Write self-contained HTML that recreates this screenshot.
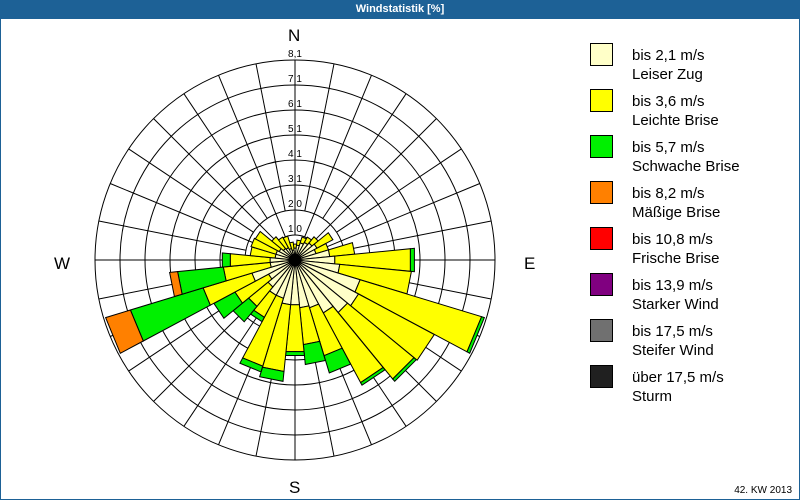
<!DOCTYPE html>
<html><head><meta charset="utf-8">
<style>
html,body{margin:0;padding:0;background:#fff;}
#wrap{position:relative;width:798px;height:499px;border:1px solid #1d6196;border-top:none;overflow:hidden;font-family:"Liberation Sans","DejaVu Sans",sans-serif;}
#title{position:absolute;left:0;top:0;width:798px;height:19px;background:#1d6196;color:#fff;font-weight:bold;font-size:11px;line-height:19px;text-align:center;}
.leg{position:absolute;left:589px;width:23px;height:23px;border:1px solid #000;box-sizing:border-box;}
.lt{position:absolute;left:631px;font-size:15px;line-height:19px;color:#000;}
.big{position:absolute;font-size:17px;color:#000;}
#foot{position:absolute;right:7px;top:485px;font-size:10px;color:#000;}
svg{position:absolute;left:0;top:0;}
</style></head><body>
<div id="wrap">
<div id="title">Windstatistik [%]</div>
<svg id="s" width="800" height="500" xmlns="http://www.w3.org/2000/svg">
<g id="grid" stroke="#000" stroke-width="1" fill="none"></g>
<g id="data" stroke="#000" stroke-width="1"></g>
<g font-family="Liberation Sans, sans-serif" font-size="10" fill="#000" text-anchor="middle">
<text x="294" y="57">8,1</text><text x="294" y="82">7,1</text><text x="294" y="107">6,1</text><text x="294" y="132">5,1</text><text x="294" y="157">4,1</text><text x="294" y="182">3,1</text><text x="294" y="207">2,0</text><text x="294" y="232">1,0</text>
</g>
</svg>
<div class="big" style="left:287px;top:26px;">N</div>
<div class="big" style="left:53px;top:254px;">W</div>
<div class="big" style="left:523px;top:254px;">E</div>
<div class="big" style="left:288px;top:478px;">S</div>

<div class="leg" style="top:43px;background:#ffffc8"></div>
<div class="lt" style="top:46px">bis 2,1 m/s<br>Leiser Zug</div>
<div class="leg" style="top:89px;background:#ffff00"></div>
<div class="lt" style="top:92px">bis 3,6 m/s<br>Leichte Brise</div>
<div class="leg" style="top:135px;background:#00f000"></div>
<div class="lt" style="top:138px">bis 5,7 m/s<br>Schwache Brise</div>
<div class="leg" style="top:181px;background:#ff8000"></div>
<div class="lt" style="top:184px">bis 8,2 m/s<br>Mäßige Brise</div>
<div class="leg" style="top:227px;background:#ff0000"></div>
<div class="lt" style="top:230px">bis 10,8 m/s<br>Frische Brise</div>
<div class="leg" style="top:273px;background:#800080"></div>
<div class="lt" style="top:276px">bis 13,9 m/s<br>Starker Wind</div>
<div class="leg" style="top:319px;background:#707070"></div>
<div class="lt" style="top:322px">bis 17,5 m/s<br>Steifer Wind</div>
<div class="leg" style="top:365px;background:#202020"></div>
<div class="lt" style="top:368px">über 17,5 m/s<br>Sturm</div>
<div id="foot">42. KW 2013</div>
</div>
<script>
var cx=294,cy=260;
function P(a,r){var t=a*Math.PI/180;return [(cx+r*Math.sin(t)).toFixed(1),(cy-r*Math.cos(t)).toFixed(1)];}
var g=document.getElementById('grid'),h='';
for(var r=25;r<=200;r+=25)h+='<circle cx="'+cx+'" cy="'+cy+'" r="'+r+'"/>';
for(var i=0;i<32;i++){var a=i*11.25,r0=(i%2?50:25);var p=P(a,r0),q=P(a,200);h+='<line x1="'+p[0]+'" y1="'+p[1]+'" x2="'+q[0]+'" y2="'+q[1]+'"/>';}
g.innerHTML=h;
var D=[[0,12,16,0,0],[11.25,15,20,0,0],[22.5,18,24,0,0],[33.75,20,26,0,0],[45,22,30,0,0],[56.25,25,43,0,0],[67.5,22,35,0,0],[78.75,35,60,0,0],[90,40,116,120,0],
[101.25,45,117,117,0],[112.5,68,195,198,0],[123.75,72,158,158,0],[135,68,154,157,0],[146.25,60,139,142,0],[157.5,50,100,118,0],[168.75,48,85,105,0],[180,45,92,96,0],
[191.25,45,112,122,0],[202.5,40,111,117,0],[213.75,40,65,70,0],[225,35,60,80,0],[236.25,30,68,92,0],[247.5,45,96,172,198],[258.75,25,72,118,126],[270,25,65,73,0],
[281.25,20,45,0,0],[292.5,20,46,0,0],[303.75,18,45,0,0],[315,15,30,0,0],[326.25,14,26,0,0],[337.5,12,25,0,0],[348.75,10,18,0,0]];
var cols=['#ffffc8','#ffff00','#00f000','#ff8000'],s='';
D.forEach(function(d){var a=d[0],prev=0;for(var k=1;k<5;k++){var r=d[k];if(!r||r<=prev)continue;
var a1=a-5.6,a2=a+5.6,p1=P(a1,prev),p2=P(a2,prev),p3=P(a2,r),p4=P(a1,r);
s+='<polygon fill="'+cols[k-1]+'" points="'+p1+' '+p4+' '+p3+' '+p2+'"/>';prev=r;}});
s+='<circle cx="'+cx+'" cy="'+cy+'" r="6" fill="#000"/>';
document.getElementById('data').innerHTML=s;
</script>
</body></html>
